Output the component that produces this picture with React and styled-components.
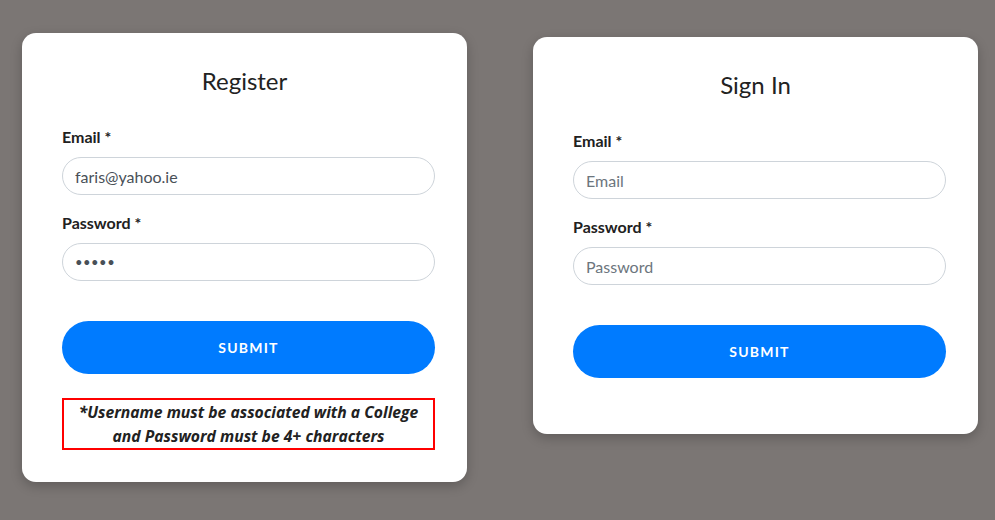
import styled, { createGlobalStyle } from 'styled-components';

const GlobalStyle = createGlobalStyle`
  html, body {
    margin: 0;
    padding: 0;
    background-color: #7b7674;
    font-family: "Segoe UI", Lato, "Open Sans", sans-serif;
  }
`;

const Page = styled.div`
  display: flex;
  align-items: flex-start;
  gap: 66px;
  padding-left: 22px;
  min-height: 520px;
  box-sizing: border-box;
`;

const Card = styled.form`
  width: 445px;
  box-sizing: border-box;
  margin-top: ${props => props.$top}px;
  padding: 32px 32px ${props => props.$bottom}px 40px;
  background-color: #ffffff;
  border-radius: 14px;
  box-shadow: 0 4px 12px rgba(0, 0, 0, 0.22);
  display: flex;
  flex-direction: column;
`;

const Title = styled.h2`
  margin: 0 0 28px -8px;
  font-size: 24px;
  line-height: 32px;
  font-weight: 400;
  color: #222;
  text-align: center;
`;

const Field = styled.div`
  display: flex;
  flex-direction: column;
  gap: 8px;
  margin-bottom: 16px;
`;

const Label = styled.label`
  font-size: 16px;
  line-height: 24px;
  font-weight: 700;
  color: #212121;
`;

const Input = styled.input`
  height: 38px;
  box-sizing: border-box;
  padding: 0 12px;
  border: 1px solid #ced4da;
  border-radius: 19px;
  font-family: inherit;
  font-size: ${props => (props.$masked ? '13px' : '16px')};
  letter-spacing: ${props => (props.$masked ? '0.5px' : 'normal')};
  color: #495057;
  outline: none;

  &::placeholder {
    color: #6c757d;
  }
`;

const SubmitButton = styled.button`
  margin-top: 24px;
  height: 53px;
  border: none;
  border-radius: 27px;
  background-color: #007bff;
  color: #fff;
  font-family: inherit;
  font-size: 14px;
  font-weight: 700;
  letter-spacing: 1.2px;
  text-transform: uppercase;
  cursor: pointer;
`;

const Note = styled.p`
  margin: 24px 0 0;
  border: 2px solid #ff0000;
  font-family: "Open Sans", sans-serif;
  font-size: 15.7px;
  line-height: 24px;
  font-weight: 700;
  font-style: italic;
  color: #222;
  text-align: center;
`;

const App = () => {
  return (
    <>
      <GlobalStyle />
      <Page>
        <Card $top={33} $bottom={32} onSubmit={e => e.preventDefault()}>
          <Title>Register</Title>
          <Field>
            <Label>Email *</Label>
            <Input type="email" placeholder="Email" defaultValue="faris@yahoo.ie" />
          </Field>
          <Field>
            <Label>Password *</Label>
            <Input $masked type="password" placeholder="Password" defaultValue="faris" />
          </Field>
          <SubmitButton type="submit">Submit</SubmitButton>
          <Note>
            *Username must be associated with a College
            <br />
            and Password must be 4+ characters
          </Note>
        </Card>
        <Card $top={37} $bottom={56} onSubmit={e => e.preventDefault()}>
          <Title>Sign In</Title>
          <Field>
            <Label>Email *</Label>
            <Input type="email" placeholder="Email" />
          </Field>
          <Field>
            <Label>Password *</Label>
            <Input type="password" placeholder="Password" />
          </Field>
          <SubmitButton type="submit">Submit</SubmitButton>
        </Card>
      </Page>
    </>
  );
};

export default App;
